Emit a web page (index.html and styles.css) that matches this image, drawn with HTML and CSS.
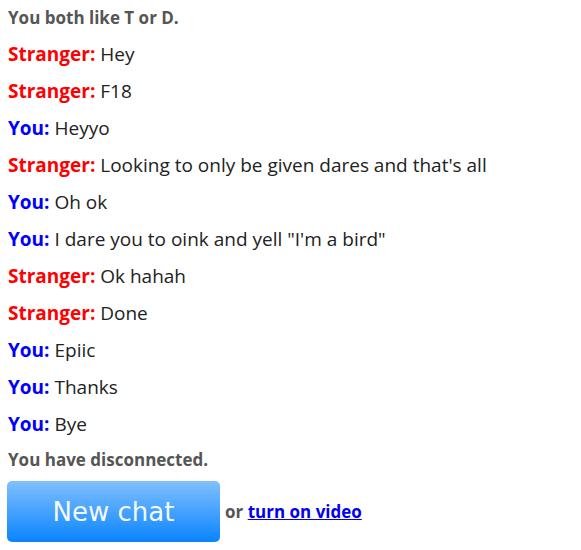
FILE: index.html
```html
<!DOCTYPE html>
<html lang="en">
<head>
  <meta charset="UTF-8" />
  <meta name="viewport" content="width=device-width, initial-scale=1.0" />
  <link rel="stylesheet" href="styles.css">
</head>
<body>
  <div class="logbox">
    <p class="status">You both like T or D.</p>
    <p class="msg"><strong class="stranger">Stranger:</strong> Hey</p>
    <p class="msg"><strong class="stranger">Stranger:</strong> F18</p>
    <p class="msg"><strong class="you">You:</strong> Heyyo</p>
    <p class="msg"><strong class="stranger">Stranger:</strong> Looking to only be given dares and that's all</p>
    <p class="msg"><strong class="you">You:</strong> Oh ok</p>
    <p class="msg"><strong class="you">You:</strong> I dare you to oink and yell "I'm a bird"</p>
    <p class="msg"><strong class="stranger">Stranger:</strong> Ok hahah</p>
    <p class="msg"><strong class="stranger">Stranger:</strong> Done</p>
    <p class="msg"><strong class="you">You:</strong> Epiic</p>
    <p class="msg"><strong class="you">You:</strong> Thanks</p>
    <p class="msg"><strong class="you">You:</strong> Bye</p>
    <p class="status">You have disconnected.</p>
    <div class="again">
      <button class="new-chat">New chat</button>
      <span class="or">or <a href="#">turn on video</a></span>
    </div>
  </div>
</body>
</html>
```

FILE: styles.css
```css
body {
  margin: 0;
  background: #ffffff;
  color: #222222;
  font-family: "Open Sans", "Noto Sans", sans-serif;
}

.logbox {
  padding: 0 7px 0 8px;
}

.msg {
  margin: 0;
  height: 37px;
  line-height: 38px;
  font-size: 19px;
}

.status {
  margin: 0;
  font-size: 17px;
  font-weight: bold;
  color: #555555;
  height: 35px;
  line-height: 35px;
}

.stranger {
  color: #ff0000;
}
.you {
  color: #0000ff;
}

.again {
  display: flex;
  align-items: center;
  gap: 5px;
  margin-left: -1px;
  margin-top: 4px;
}

.new-chat {
  width: 213px;
  height: 61px;
  border: none;
  border-radius: 5px;
  background: linear-gradient(#80c0ff, #0a84ff);
  color: #f4f9ff;
  font-family: "DejaVu Sans", sans-serif;
  font-size: 26px;
  cursor: pointer;
}

.or {
  font-size: 17px;
  font-weight: bold;
  color: #555555;
}
.or a {
  color: #0000ee;
}
```
